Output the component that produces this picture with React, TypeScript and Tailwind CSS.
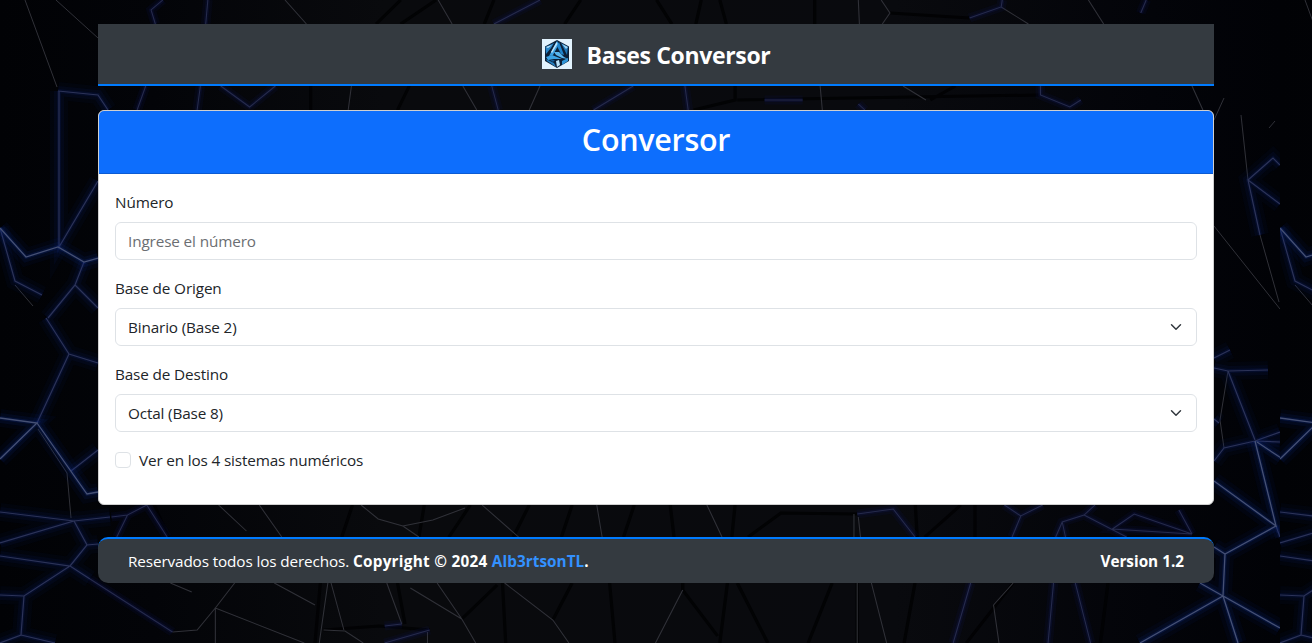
import React from 'react';

type LineProps = { d: string };

const Grey = ({ d }: LineProps) => (
  <path d={d} fill="none" stroke="#303138" strokeWidth="1" />
);
const Dark = ({ d }: LineProps) => (
  <path d={d} fill="none" stroke="#010102" strokeOpacity="0.8" strokeWidth="3" />
);
const Faint = ({ d }: LineProps) => (
  <g fill="none">
    <path d={d} stroke="#101c60" strokeOpacity="0.12" strokeWidth="9" />
    <path d={d} stroke="#101c60" strokeOpacity="0.22" strokeWidth="4" />
    <path d={d} stroke="#262b4c" strokeWidth="1" />
  </g>
);
const Glow = ({ d }: LineProps) => (
  <g fill="none">
    <path d={d} stroke="#10226c" strokeOpacity="0.08" strokeWidth="18" />
    <path d={d} stroke="#10226c" strokeOpacity="0.12" strokeWidth="10" />
    <path d={d} stroke="#10226c" strokeOpacity="0.2" strokeWidth="4" />
    <path d={d} stroke="#2c3358" strokeWidth="1.2" />
  </g>
);
const Bright = ({ d }: LineProps) => (
  <g fill="none">
    <path d={d} stroke="#102a80" strokeOpacity="0.08" strokeWidth="18" />
    <path d={d} stroke="#102a80" strokeOpacity="0.14" strokeWidth="10" />
    <path d={d} stroke="#102a80" strokeOpacity="0.25" strokeWidth="4" />
    <path d={d} stroke="#455074" strokeWidth="1.3" />
  </g>
);

function Backdrop() {
  return (
    <svg className="absolute inset-0 -z-10" width="1312" height="643" viewBox="0 0 1312 643" aria-hidden="true">
      <defs>
        <linearGradient id="base" x1="0" x2="1280" y1="0" y2="0" gradientUnits="userSpaceOnUse">
          <stop offset="0" stopColor="#010205" />
          <stop offset="0.12" stopColor="#030408" />
          <stop offset="0.3" stopColor="#090a0d" />
          <stop offset="0.7" stopColor="#090a0e" />
          <stop offset="0.9" stopColor="#030409" />
          <stop offset="1" stopColor="#010206" />
        </linearGradient>
        <clipPath id="tileClip">
          <rect width="1280" height="643" />
        </clipPath>
        <g id="tile" clipPath="url(#tileClip)">
          <rect width="1280" height="643" fill="url(#base)" />
          <Grey d="M25 0L57 87M56 0L98 38M15 285L33 306M38 429L67 473L71 518" />
          <Glow d="M58 91L98 95L108 110M59 91V247L98 181M0 228L15 281L42 295M48 318L75 285L98 308M75 285L84 262M46 318L69 354L98 363M69 354L37 423M71 471L98 450M0 512L74 521L110 517M0 543L74 521L87 545L70 566L0 556M87 545L98 544M24 596L21 635L0 643M21 635L55 643M70 566L24 596L0 595M70 566L90 579" />
          <Bright d="M0 228L26 257L58 247L84 262L98 258M0 418L37 423L0 459M37 423L87 494L98 492" />

          <g transform="matrix(1.0714 0 0 1 -6.43 0)">
            <Dark d="M380 0L357 24M413 0L380 24M467 0L458 24M548 0L533 24M388 86L377 110M296 86V110M335 505L325 537M402 505L397 537M445 505L425 537M500 505L485 537M540 505L530 537M598 505L588 537M150 505L163 537M305 583L300 643M377 583L384 624M437 619L470 585M475 583L478 643M522 620L540 583M308 630L360 626L407 630M575 583L580 643" />
            <Grey d="M272 0L292 24M415 0L428 24M334 86L331 110M438 86L451 110M210 505L236 531M248 505L269 537M343 505L359 519L382 526L397 537M382 526L410 520L440 508M456 505L490 537M563 505L568 537M165 583L185 592M262 583L300 605M207 643V608L290 643M207 608L225 583M207 608L190 630L167 632M315 583L327 630M308 630L328 631L345 643M312 583L304 643M367 583L381 624M389 588L437 619L414 583M437 619L450 643M477 583L522 620L537 643M405 632V643M510 86L500 110" />
            <Faint d="M510 0L467 24M158 0L147 10L151 24M200 0L198 24M142 86L134 110M193 86L190 110M212 86L239 107L263 86M465 86L471 110M597 86L560 110M110 517L125 515L143 505M125 515L115 537M143 505L162 537M90 579L167 632M365 626L381 624M365 643L407 630" />
          </g>

          <g transform="matrix(1.0905 0 0 1 -58.8 0)">
            <Dark d="M656 0L670 24M697 0L692 24M714 0L720 24M801 0V24M870 13L943 18M728 86V100L690 110M730 100L1008 95M930 86L907 100M668 500L672 537M728 505L725 537M740 537L770 513L840 514M893 500L895 537M902 537L935 505M948 505V537M680 583V590L712 636M730 583L758 643M817 583L795 643M893 583L883 643M983 583L940 643M1070 583L1063 643M840 583V643M721 583L714 643" />
            <Grey d="M841 0L842 24M862 0L870 13L863 24M972 7L997 24M1052 0L1066 24M882 86L903 100M1147 86L1157 110M806 86L808 110M700 500L716 537M837 514V537M841 517L843 537M680 590L655 643M840 583V643M853 583L867 643M965 605L970 643M983 583L965 605" />
            <Faint d="M973 0L972 7L943 18M1105 0L1100 13M682 86L685 110M755 100L790 100M841 104L847 110M1008 86V95L1035 107L1045 100M840 514L873 509L893 537M975 505L990 516L1010 505M990 516L982 537M1058 505L1048 515L1028 522L1022 537M1028 522L1031 537M1048 515L1087 537M1074 529L1094 514L1147 534Z M1135 510L1147 534M944 583L928 643M1020 583L1015 643M1040 583L1054 643" />
          </g>

          <Grey d="M1214 120L1224 98M1241 115L1248 180M1269 128L1275 121M1260 235L1279 302M1214 226L1280 309M1228 371L1220 420L1224 448" />
          <Glow d="M1260 235L1248 180L1273 158L1280 165M1248 180L1280 204M1214 358L1230 350M1214 368L1228 371L1268 370M1228 371L1255 440M1214 419L1219 423M1214 461L1224 448L1255 441L1280 432M1255 441L1280 442M1276 526L1280 537" />
          <Bright d="M1257 442L1281 458M1255 441L1276 526L1214 481M1276 526L1225 554L1214 547M1225 554L1223 596L1200 583M1280 628L1223 596L1140 643M1223 596L1238 643" />
        </g>
      </defs>
      <use href="#tile" />
      <use href="#tile" x="1280" />
    </svg>
  );
}

function Logo() {
  return (
    <svg className="block shrink-0" width="30" height="30" viewBox="0 0 30 30" aria-hidden="true">
      <rect width="30" height="30" fill="#e2f3fe" />
      <path d="M15 1L27 7.5V22L15 29L3 22V7.5Z" fill="#0c2038" />
      <path d="M3.500 8L12 4L9 9L4 15Z" fill="#2a86c8" />
      <path d="M4 8L10 6L6 9Z" fill="#c3e7fc" />
      <path d="M15 2L17 5L11 16L7 17Z" fill="#3aa0e4" />
      <path d="M14.500 3L15.500 5L10 14L9 13Z" fill="#b9e2fb" />
      <path d="M17 3L22 16L19 15L15 7Z" fill="#1f84cc" />
      <path d="M19 4L26 8L25 16Z" fill="#1c76b9" />
      <path d="M20 5L26 8L24 10Z" fill="#9ad4f5" />
      <path d="M12 13L17 13L22 18L26 20L20 19L14 16Z" fill="#57b5ee" />
      <path d="M4 18L10 16L20 20L12 20L6 21Z" fill="#3ba3e5" />
      <path d="M4 20L12 24L14 28L5 22Z" fill="#247fc0" />
      <path d="M14 22L17 21L18 26L15 28Z" fill="#b9e2fa" />
      <path d="M20 22L26 19V22L20 26Z" fill="#2f95d8" />
      <path d="M8 21L13 21L11 23Z" fill="#135d98" />
    </svg>
  );
}

const Chevron = () => (
  <svg width="16" height="12" viewBox="0 0 16 16" className="h-3 w-4 shrink-0" aria-hidden="true">
    <path d="m2 5 6 6 6-6" fill="none" stroke="#343a40" strokeWidth="2" strokeLinecap="round" strokeLinejoin="round" />
  </svg>
);

function SelectBox({ children }: { children: React.ReactNode }) {
  return (
    <button className="flex h-[38px] w-full items-center justify-between rounded-md border border-[#dee2e6] bg-white px-3 text-left tracking-[-0.15px]">
      {children}
      <Chevron />
    </button>
  );
}

export default function App() {
  return (
    <div className="relative isolate h-[643px] w-[1312px] overflow-hidden bg-black px-[98px] pt-6 font-['Open_Sans','Noto_Sans',sans-serif] text-[15.3px] leading-6 tracking-[-0.13px] text-[#212529]">
      <Backdrop />
      <header className="flex h-[62px] items-center justify-center gap-[15px] border-b-2 border-[#007bff] bg-[#343a40]">
        <Logo />
        <h1 className="pt-[2px] text-[23px] leading-9 font-bold tracking-[-0.35px] whitespace-nowrap text-white">Bases Conversor</h1>
      </header>

      <main className="mt-6 h-[395px] overflow-hidden rounded-md border border-[#d0d0d0] bg-white">
        <h2 className="h-[63px] border-b border-[#0b5bd3] bg-[#0d6efd] pt-[9px] text-center text-[30.5px] leading-[38px] font-semibold tracking-[-0.3px] text-white">Conversor</h2>
        <div className="flex flex-col px-4 pt-4">
          <label className="mb-2">Número</label>
          <input
            className="mb-4 h-[38px] rounded-md border border-[#dee2e6] px-3 placeholder:text-[#6b6e72]"
            placeholder="Ingrese el número"
          />
          <label className="mb-2">Base de Origen</label>
          <SelectBox>Binario (Base 2)</SelectBox>
          <label className="mt-4 mb-2">Base de Destino</label>
          <SelectBox>Octal (Base 8)</SelectBox>
          <label className="mt-4 flex items-center gap-2">
            <input type="checkbox" className="h-4 w-4 appearance-none rounded border border-[#dee2e6] bg-white" />
            <span className="tracking-[-0.15px]">Ver en los 4 sistemas numéricos</span>
          </label>
        </div>
      </main>

      <footer className="mt-8 flex h-[46px] items-center justify-between rounded-[10px] border-t-2 border-[#007bff] bg-[#343a40] px-[30px] text-white">
        <p className="whitespace-nowrap">
          Reservados todos los derechos.{' '}
          <strong className="font-bold tracking-[0.28px]">
            Copyright © 2024 <span className="tracking-[0.05px] text-[#3391ff]">Alb3rtsonTL</span>.
          </strong>
        </p>
        <strong className="font-bold tracking-normal">Version 1.2</strong>
      </footer>
    </div>
  );
}
